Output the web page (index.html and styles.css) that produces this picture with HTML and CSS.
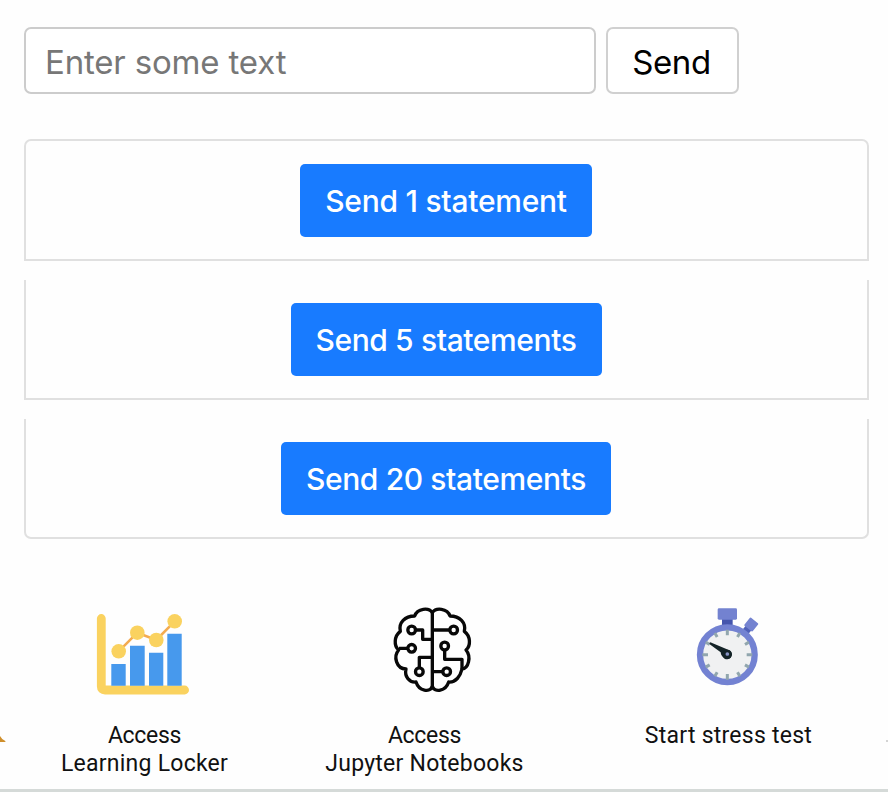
FILE: index.html
```html
<!DOCTYPE html>
<html lang="en">
<head>
<meta charset="utf-8">
<title>Statements</title>
<link rel="stylesheet" href="styles.css">
</head>
<body>
<main class="page">
  <form class="entry">
    <input class="entry-input" type="text" placeholder="Enter some text">
    <button class="entry-send" type="button">Send</button>
  </form>
  <section class="cards">
    <div class="card card-first"><button class="primary one" type="button">Send 1 statement</button></div>
    <div class="card"><button class="primary five" type="button">Send 5 statements</button></div>
    <div class="card card-last"><button class="primary twenty" type="button">Send 20 statements</button></div>
  </section>
  <nav class="links">
    <a class="link">
      <svg class="icon" viewBox="84 600 120 100">
        <path d="M101.3 618.5V686.5Q101.3 690 105 690H184.6" fill="none" stroke="#fad25f" stroke-width="8.8" stroke-linecap="round"/>
        <path d="M111.3 664h14.4v21.8h-14.4zM130 645.7h14.7v40.1H130zM149 652.7h14.3v33.1H149zM167.3 633.7h14.4v52.1h-14.4z" fill="#4799ed"/>
        <path d="M118.7 651.3L137.3 632.7L156.3 640L174.7 621.3" fill="none" stroke="#f3ab50" stroke-width="2.6"/>
        <g fill="#fad25f"><circle cx="118.7" cy="651.3" r="7.3"/><circle cx="137.3" cy="632.7" r="7.3"/><circle cx="156.3" cy="640" r="7.3"/><circle cx="174.7" cy="621.3" r="7.3"/></g>
      </svg>
      <span class="caption"><span class="tight">Access</span><br>Learning Locker</span>
    </a>
    <a class="link">
      <svg class="icon" viewBox="364 600 120 100">
        <g transform="translate(380 600) scale(.33333)" fill="none" stroke="#080808" stroke-width="10" stroke-linejoin="round">
          <path d="M157 36V266"/>
          <path d="M157 38C147 22 112 24 104 48C75 48 55 68 61 94C42 108 41 138 56 150C39 170 49 206 78 207C73 229 87 248 108 246C117 274 150 279 157 259"/>
          <path d="M157 38C167 22 202 24 210 48C239 48 259 68 253 94C272 108 273 138 258 150C275 170 265 206 246 207C241 229 227 248 206 246C197 274 164 279 157 259"/>
          <path d="M107 90H128V118H157M57 145H83M118 203V172H157M157 90H209M194 150V178H246V207M157 215H188"/>
          <circle cx="95" cy="90" r="11.5"/><circle cx="95" cy="145" r="11.5"/><circle cx="118" cy="215" r="11.5"/>
          <circle cx="221" cy="90" r="11.5"/><circle cx="194" cy="138" r="11.5"/><circle cx="200" cy="215" r="11.5"/>
        </g>
      </svg>
      <span class="caption"><span class="tight">Access</span><br>Jupyter Notebooks</span>
    </a>
    <a class="link link-last">
      <svg class="icon" viewBox="668 600 120 100">
        <g transform="translate(680 600) scale(.33333)">
          <path d="M126 56h32v24h-32z" fill="#4555ad"/>
          <rect x="113" y="25" width="58" height="34" rx="4" fill="#7382d0"/>
          <g transform="translate(142 164) rotate(38.5)">
            <path d="M-11 -106h22v22h-22z" fill="#4f60b8"/>
            <rect x="-16" y="-131" width="32" height="31" rx="3" fill="#7382d0"/>
          </g>
          <circle cx="142" cy="164" r="82" fill="#f0f1f2" stroke="#7382d2" stroke-width="19"/>
          <g stroke="#91a6ae" stroke-width="9">
            <path d="M142 89v17M142 222v17M67 164h17M200 164h17"/>
            <path d="M179.5 99l-7 12M206.9 126.500l-12 7M206.9 201.500l-12-7M179.500 229l-7-12M104.500 229l7-12M77 201.500l12-7M77 126.500l12 7M104.500 99l7 12"/>
          </g>
          <path d="M91 127L148 151A14 14 0 0 1 134 176Q123 169 122 157L89 133Q87 128 91 127Z" fill="#142327"/>
          <circle cx="142" cy="163" r="14" fill="#142327"/>
          <circle cx="142" cy="162" r="5.500" fill="#8793c4"/>
        </g>
      </svg>
      <span class="caption">Start stress test</span>
    </a>
  </nav>
  <svg class="edge edge-left" viewBox="0 0 6 6"><path d="M0 0Q2 4 5.700 5.200L5 6H0Z" fill="#cf8f2c"/></svg>
  <span class="edge edge-right"></span>
</main>
</body>
</html>
```
FILE: styles.css
```css
* { box-sizing: border-box; }
body { margin: 0; background: #fefefe; font-family: Inter, "Liberation Sans", sans-serif; }
button, input { font-family: inherit; margin: 0; }

.page { position: relative; height: 792px; padding-top: 27px; border-bottom: 3px solid #d5dad8; display: flex; flex-direction: column; overflow: hidden; }

.entry { display: flex; gap: 10px; padding-left: 24px; height: 67px; }
.entry-input { width: 572px; border: 2px solid #ccc; border-radius: 7px; padding: 2px 19px 0; font-size: 33px; letter-spacing: -0.17px; background: #fff; color: #222; }
.entry-input::placeholder { color: #777; opacity: 1; }
.entry-send { width: 133px; border: 2px solid #d0d0d0; border-radius: 7px; padding: 2px 2px 0 0; font-size: 33px; letter-spacing: -0.4px; background: #fff; color: #000; }

.cards { margin: 45px 19px 0 24px; display: grid; grid-template-rows: 122px 120px 120px; row-gap: 19px; }
.card { display: flex; justify-content: center; align-items: flex-start; padding: 23px 1px 0 0; border: 2px solid #e0e0e0; border-top: 0; }
.card-first { border-top: 2px solid #e0e0e0; border-radius: 7px 7px 0 0; }
.card-last { border-radius: 0 0 7px 7px; }
.primary { height: 73px; padding: 0; border: 0; border-radius: 5px; background: #187bff; color: #fff; font-size: 30px; font-weight: 500; letter-spacing: -0.38px; white-space: nowrap; }
.one { width: 292px; letter-spacing: -0.25px; }
.five { width: 311px; }
.twenty { width: 330px; }

.links { margin-top: 61px; display: grid; grid-template-columns: 288px 272px 328px; }
.link { display: flex; flex-direction: column; align-items: center; color: #111; }
.link-last { padding-left: 8px; }
.icon { width: 120px; height: 100px; flex: none; }
.caption { margin: 22px 0 0 1px; font: 400 23px/28px Roboto, "Liberation Sans", sans-serif; letter-spacing: 0.25px; text-align: center; white-space: nowrap; color: #111; }
.tight { letter-spacing: -0.3px; }

.edge { position: absolute; }
.edge-left { left: 0; top: 736px; width: 6px; height: 6px; }
.edge-right { right: 0; top: 740px; width: 2px; height: 2px; background: #d4d4d4; }
```
